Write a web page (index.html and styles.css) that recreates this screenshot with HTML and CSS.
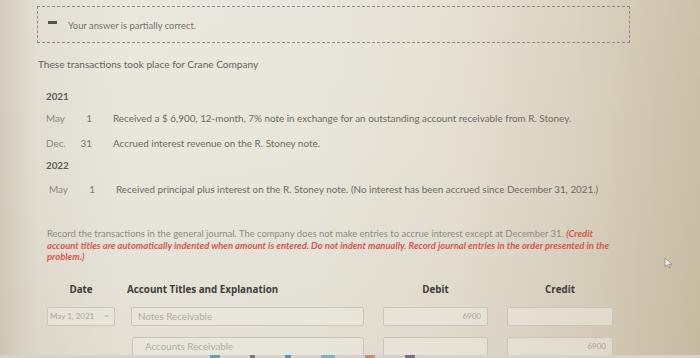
FILE: index.html
```html
<!DOCTYPE html>
<html>
<head>
<meta charset="utf-8">
<link rel="stylesheet" href="styles.css">
</head>
<body>
<div class="screen">
  <div class="page">
    <div class="feedback">
      <span class="minus"></span>
      <span class="feedback-text">Your answer is partially correct.</span>
    </div>

    <p class="intro">These transactions took place for Crane Company</p>

    <div class="schedule">
      <div class="year y1">2021</div>
      <div class="event e1">
        <span class="month">May</span><span class="day">1</span>
        <span class="desc">Received a $ 6,900, 12-month, 7% note in exchange for an outstanding account receivable from R. Stoney.</span>
      </div>
      <div class="event e2">
        <span class="month">Dec.</span><span class="day">31</span>
        <span class="desc">Accrued interest revenue on the R. Stoney note.</span>
      </div>
      <div class="year y2">2022</div>
      <div class="event e3 shifted">
        <span class="month">May</span><span class="day">1</span>
        <span class="desc">Received principal plus interest on the R. Stoney note. (No interest has been accrued since December 31, 2021.)</span>
      </div>
    </div>

    <p class="instructions">Record the transactions in the general journal. The company does not make entries to accrue interest except at December 31. <em class="warn">(Credit</em><br><em class="warn">account titles are automatically indented when amount is entered. Do not indent manually. Record journal entries in the order presented in the</em><br><em class="warn">problem.)</em></p>

    <div class="journal">
      <div class="head c-date center">Date</div>
      <div class="head c-acct acct-head">Account Titles and Explanation</div>
      <div class="head c-debit center">Debit</div>
      <div class="head c-credit center">Credit</div>

      <div class="field c-date select"><span class="sel-text">May 1, 2021</span><span class="chev">&#8964;</span></div>
      <div class="field acct c-acct">Notes Receivable</div>
      <div class="field c-debit num">6900</div>
      <div class="field c-credit num"></div>

      <div class="field acct c-acct indent">Accounts Receivable</div>
      <div class="field c-debit num"></div>
      <div class="field c-credit num">6900</div>
    </div>
  </div>

  <svg class="cursor" width="9" height="12" viewBox="0 0 9 12">
    <path d="M1 1 L1 10 L3.3 7.8 L5 11 L6.3 10.4 L4.7 7.3 L8 7.3 Z" fill="#f2f0ea" stroke="#8a8780" stroke-width="0.8"/>
  </svg>

  <div class="taskbar">
    <span class="tb tb1"></span><span class="tb tb2"></span><span class="tb tb3"></span><span class="tb tb4"></span><span class="tb tb5"></span><span class="tb tb6"></span>
  </div>
</div>
</body>
</html>
```

FILE: styles.css
```css
html, body {
  margin: 0;
  padding: 0;
}
body {
  width: 700px;
  height: 358px;
  overflow: hidden;
  font-family: Lato, "Open Sans", sans-serif;
  color: #6a6863;
}
.screen {
  position: relative;
  width: 700px;
  height: 358px;
  overflow: hidden;
  background:
    linear-gradient(180deg, rgba(255,255,255,0.05) 0%, rgba(0,0,0,0) 40%, rgba(120,100,60,0.05) 100%),
    linear-gradient(90deg, #d2cbbb 0%, #e1ddd2 5%, #e9e6dc 18%, #e8e5db 45%, #e4dfd2 65%, #dad2c1 82%, #cabea6 100%);
}
.page {
  padding: 6px 0 0 37px;
}
.feedback {
  width: 581px;
  height: 35px;
  border: 1px dashed #8e8b86;
  display: flex;
  align-items: center;
  gap: 11px;
  padding-left: 10px;
}
.minus {
  width: 9px;
  height: 3px;
  background: #55524d;
  margin-top: -4px;
}
.feedback-text {
  font-size: 9.4px;
  line-height: 12px;
  color: #75726c;
  margin-top: 2px;
}
.intro {
  margin: 15px 0 0 1px;
  font-size: 10.1px;
  line-height: 12px;
  color: #66635e;
}
.schedule {
  margin-top: 20px;
  padding-left: 9px;
  display: flex;
  flex-direction: column;
}
.year {
  font-size: 9.8px;
  font-weight: 700;
  color: #5e5b56;
  line-height: 12px;
}
.y1 { height: 22px; }
.y2 { height: 24px; }
.event {
  display: flex;
  line-height: 12px;
  font-size: 9.9px;
  color: #6e6b65;
}
.e1 { height: 25px; }
.e2 { height: 22px; }
.e3 { height: 12px; }
.event .month {
  width: 30px;
  color: #8a8781;
}
.event .day {
  width: 16px;
  text-align: right;
  color: #7a7770;
}
.event .desc {
  margin-left: 21px;
}
.shifted {
  padding-left: 3px;
}
.instructions {
  margin: 33px 0 0 10px;
  font-size: 9.45px;
  line-height: 11.5px;
  color: #8e8b85;
  white-space: nowrap;
}
.warn {
  color: #d8574f;
  font-weight: 700;
  font-style: italic;
}
.journal {
  margin: 21px 0 0 10px;
  display: grid;
  grid-template-columns: 68px 16px 233px 19px 105px 19px 106px;
  grid-template-rows: 12px 19px 19px;
  row-gap: 11px;
}
.c-date { grid-column: 1; }
.c-acct { grid-column: 3; }
.c-debit { grid-column: 5; }
.c-credit { grid-column: 7; }
.head {
  font-family: "Open Sans", Lato, sans-serif;
  font-weight: 700;
  font-size: 9.8px;
  color: #3f3d3a;
  line-height: 12px;
  white-space: nowrap;
}
.acct-head {
  margin-left: -4px;
}
.center {
  text-align: center;
}
.field {
  border: 1px solid #c9c5bb;
  border-radius: 2px;
  background: rgba(236, 233, 224, 0.55);
  font-size: 8px;
  color: #a9a69f;
  line-height: 17px;
  padding: 0 6px;
  white-space: nowrap;
  overflow: hidden;
}
.acct {
  font-size: 9.8px;
  color: #b0ada6;
}
.num {
  text-align: right;
}
.indent {
  padding-left: 12px;
  margin-left: 1px;
}
.select {
  display: flex;
  justify-content: space-between;
  padding: 0 4px 0 2px;
}
.chev {
  font-size: 8px;
  line-height: 12px;
  color: #aaa79f;
}
.cursor {
  position: absolute;
  left: 664px;
  top: 257px;
}
.taskbar {
  position: absolute;
  left: 0;
  right: 0;
  bottom: 0;
  height: 3px;
  background: #d6d3cc;
  display: flex;
  gap: 30px;
  padding-left: 210px;
}
.tb {
  width: 10px;
  height: 3px;
}
.tb1 { background: #5aa6b8; }
.tb2 { background: #7d7a74; width: 5px; }
.tb3 { background: #5a8fc0; width: 6px; }
.tb4 { background: #6fb7c9; width: 14px; }
.tb5 { background: #d88a5a; }
.tb6 { background: #7a6c8f; }
```
